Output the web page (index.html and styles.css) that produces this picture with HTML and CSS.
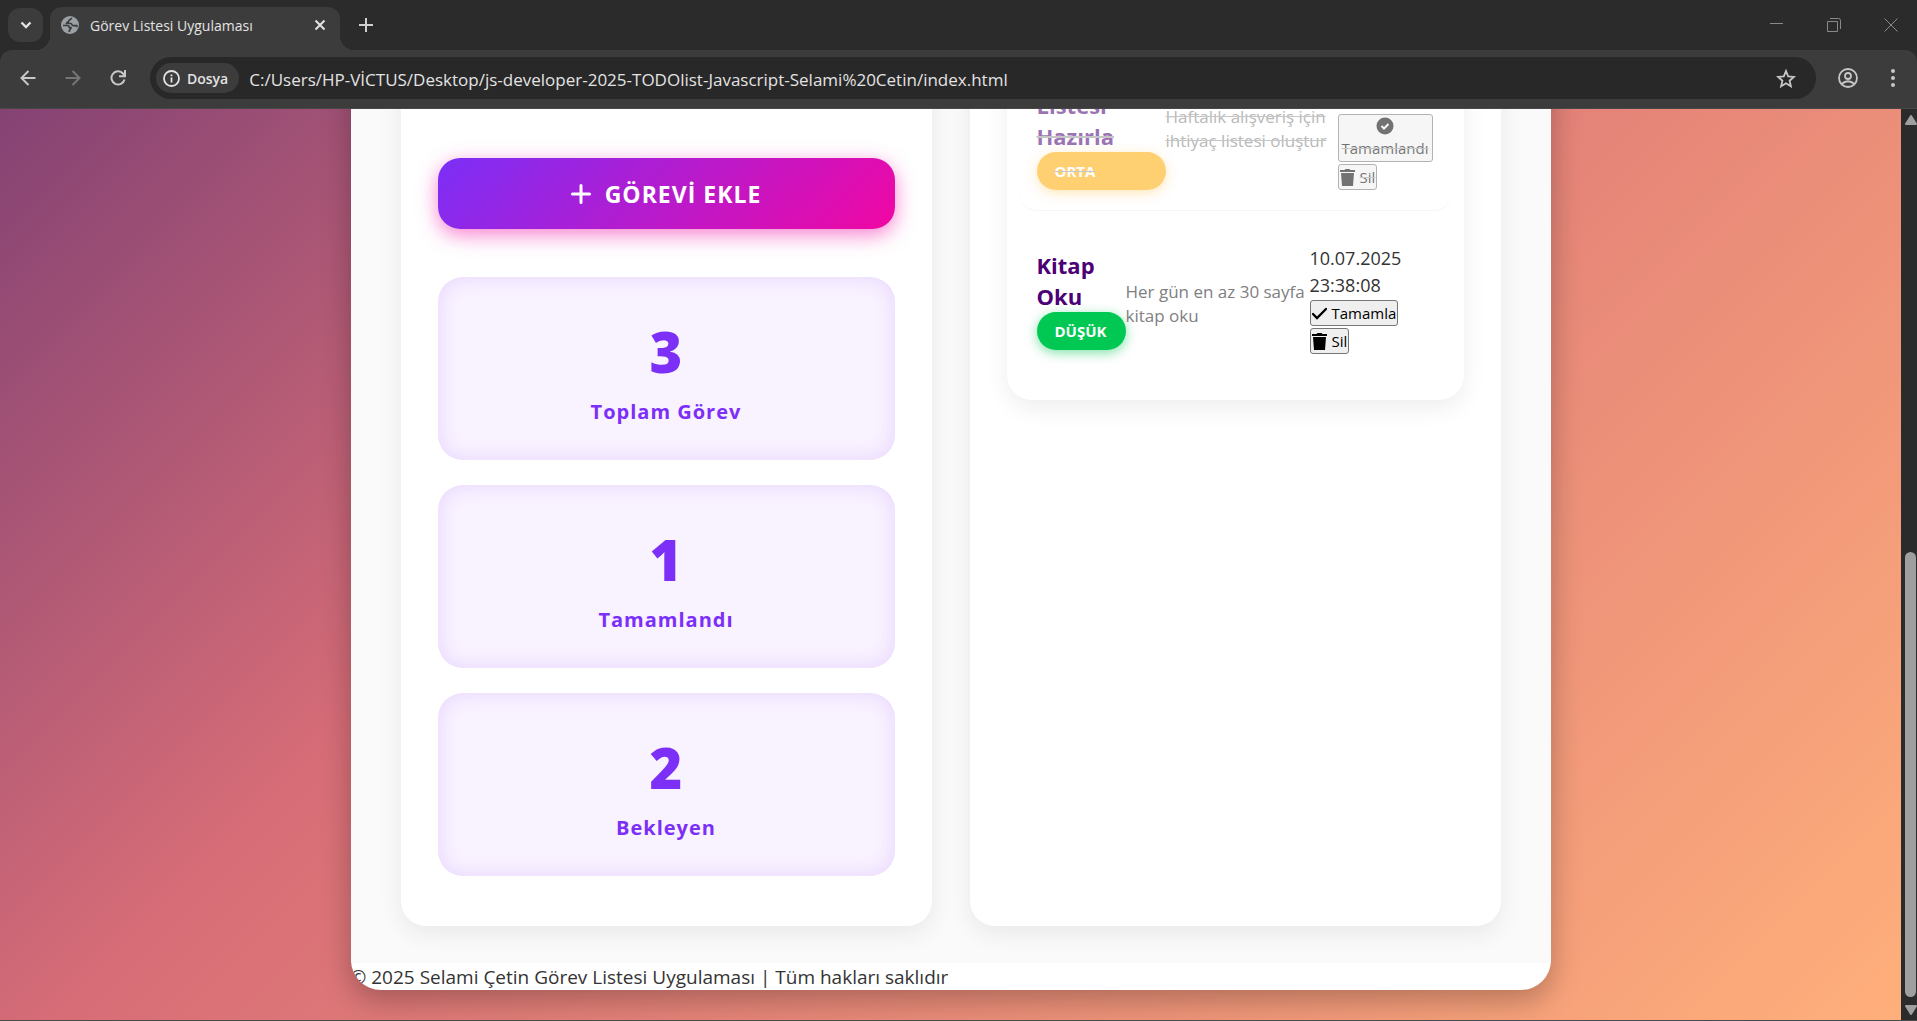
FILE: index.html
```html
<!DOCTYPE html>
<html lang="tr">
<head>
<meta charset="utf-8">
<title>Görev Listesi Uygulaması</title>
<link rel="stylesheet" href="styles.css">
</head>
<body>
<div class="browser">
  <header class="chrome">
    <div class="tabs">
      <button class="tab-search" aria-label="Sekme ara"><svg width="12" height="8" viewBox="0 0 12 8"><path d="M1.500 1.500 6 6l4.500-4.500" fill="none" stroke="#e3e3e3" stroke-width="2.400"/></svg></button>
      <div class="tab">
        <svg width="18" height="18" viewBox="0 0 18 18"><circle cx="9" cy="9" r="9" fill="#9aa0a6"/><path d="M10.500 1.800c.5 2-2.700 1.400-2.700 3.200 0 1.500-2.300.8-2.300 2.500h4.300c1.200 0 .8 2.200 2.400 2.200h3.600v1.500M2 9.500h3.500c1.800 0 3 .8 3 2.200H10c0 1.500-1.800 1.500-1.800 4.300" fill="none" stroke="#3c3c3c" stroke-width="1.700"/></svg>
        <span class="tab-title">Görev Listesi Uygulaması</span>
        <button class="plain" aria-label="Sekmeyi kapat"><svg width="12" height="12" viewBox="0 0 12 12"><path d="m1.500 1.500 9 9m0-9-9 9" stroke="#e3e3e3" stroke-width="2"/></svg></button>
      </div>
      <button class="plain new-tab" aria-label="Yeni sekme"><svg width="14" height="14" viewBox="0 0 14 14"><path d="M7 0v14M0 7h14" stroke="#d0d0d0" stroke-width="2"/></svg></button>
      <div class="window-controls">
        <button class="plain" aria-label="Simge durumuna küçült"><svg width="14" height="14" viewBox="0 0 14 14"><path d="M0 5.500h13" stroke="#8a8a8a"/></svg></button>
        <button class="plain" aria-label="Geri yükle"><svg width="14" height="14" viewBox="0 0 14 14"><path d="M.5 3.500h10v10H.5zM3 .5h8.500q2 0 2 2V11" fill="none" stroke="#8a8a8a"/></svg></button>
        <button class="plain" aria-label="Kapat"><svg width="14" height="14" viewBox="0 0 14 14"><path d="m.5.5 13 13m0-13-13 13" stroke="#8a8a8a"/></svg></button>
      </div>
    </div>
    <div class="toolbar">
      <button class="plain nav" aria-label="Geri"><svg width="16" height="16" viewBox="0 0 16 16"><path d="M15.500 8H2m6.500-7L1.500 8l7 7" fill="none" stroke="#c7c7c7" stroke-width="2"/></svg></button>
      <button class="plain nav" aria-label="İleri"><svg width="16" height="16" viewBox="0 0 16 16"><path d="M.5 8H14M7.500 1l7 7-7 7" fill="none" stroke="#757575" stroke-width="2"/></svg></button>
      <button class="plain nav" aria-label="Yenile"><svg width="16" height="16" viewBox="0 0 16 16"><path d="M14.500 9.500A6.600 6.600 0 1 1 13 3.500l1.500 2M15 0v6.200H9" fill="none" stroke="#c7c7c7" stroke-width="2"/></svg></button>
      <div class="omnibox">
        <button class="site-chip"><svg width="17" height="17" viewBox="0 0 17 17"><circle cx="8.500" cy="8.500" r="7.500" fill="none" stroke="#e3e3e3" stroke-width="1.800"/><path d="M8.500 7.500v5M8.500 4.500v1.800" stroke="#e3e3e3" stroke-width="1.800"/></svg>Dosya</button>
        <input class="url" aria-label="Adres" value="C:/Users/HP-VİCTUS/Desktop/js-developer-2025-TODOlist-Javascript-Selami%20Cetin/index.html">
        <button class="plain" aria-label="Yer işareti ekle"><svg width="20" height="19" viewBox="0 0 20 19"><path d="m10 2 2.200 5.400 5.800.5-4.400 3.800 1.300 5.600L10 14.300l-4.900 3 1.300-5.600L2 7.900l5.800-.5z" fill="none" stroke="#c7c7c7" stroke-width="1.800"/></svg></button>
      </div>
      <button class="plain profile" aria-label="Profil"><svg width="20" height="20" viewBox="0 0 20 20"><g fill="none" stroke="#c7c7c7" stroke-width="1.800"><circle cx="10" cy="10" r="9"/><circle cx="10" cy="8" r="3"/><path d="M3.500 16q6.500-5.500 13 0"/></g></svg></button>
      <button class="plain menu" aria-label="Menü"><svg width="4" height="18" viewBox="0 0 4 18" fill="#c7c7c7"><circle cx="2" cy="2" r="2"/><circle cx="2" cy="9" r="2"/><circle cx="2" cy="16" r="2"/></svg></button>
    </div>
  </header>
  <div class="view">
    <div class="page">
      <div class="container">
        <main class="columns">
          <section class="card form-card">
            <button class="add-button"><svg width="20" height="20" viewBox="0 0 20 20"><path d="M10 1.500v17M1.500 10h17" stroke="#fff" stroke-width="3" stroke-linecap="round"/></svg>GÖREVİ EKLE</button>
            <div class="stats">
              <div class="stat"><span class="stat-number">3</span><span class="stat-label">Toplam Görev</span></div>
              <div class="stat"><span class="stat-number">1</span><span class="stat-label">Tamamlandı</span></div>
              <div class="stat"><span class="stat-number">2</span><span class="stat-label">Bekleyen</span></div>
            </div>
          </section>
          <section class="card list-card">
            <ul class="tasks">
              <li class="task done">
                <div class="task-head"><h3>Alışveriş Listesi Hazırla</h3><span class="badge medium">ORTA</span></div>
                <p>Haftalık alışveriş için ihtiyaç listesi oluştur</p>
                <div class="actions">
                  <button class="small stacked"><svg width="18" height="18" viewBox="0 0 18 18"><circle cx="9" cy="9" r="8.500"/><path d="m5.500 9 2.500 2.500L12.500 7" fill="none" stroke="#efefef" stroke-width="2"/></svg><span>Tamamlandı</span></button>
                  <button class="small"><svg width="15" height="17" viewBox="0 0 15 17"><path d="M0 1h4.500l1-1h4l1 1H15v2H0zM1 4h13l-1 13H2z"/></svg><span>Sil</span></button>
                </div>
              </li>
              <li class="task open">
                <div class="task-head"><h3>Kitap Oku</h3><span class="badge low">DÜŞÜK</span></div>
                <p>Her gün en az 30 sayfa kitap oku</p>
                <div class="actions">
                  <time>10.07.2025 23:38:08</time>
                  <button class="small"><svg width="15" height="17" viewBox="0 0 15 17"><path d="m1 9 4 4 9-9" fill="none" stroke="#000" stroke-width="2.300" stroke-linecap="round"/></svg><span>Tamamla</span></button>
                  <button class="small"><svg width="15" height="17" viewBox="0 0 15 17"><path d="M0 1h4.500l1-1h4l1 1H15v2H0zM1 4h13l-1 13H2z"/></svg><span>Sil</span></button>
                </div>
              </li>
            </ul>
          </section>
        </main>
        <footer>© 2025 Selami Çetin Görev Listesi Uygulaması | Tüm hakları saklıdır</footer>
      </div>
    </div>
    <div class="scrollbar">
      <svg width="12" height="10" viewBox="0 0 12 10"><path d="M6 1 11 9H1z" fill="#9f9f9f" stroke="#9f9f9f" stroke-width="2" stroke-linejoin="round"/></svg>
      <div class="track"><div class="thumb"></div></div>
      <svg width="12" height="10" viewBox="0 0 12 10"><path d="M1 1h10L6 9z" fill="#9f9f9f" stroke="#9f9f9f" stroke-width="2" stroke-linejoin="round"/></svg>
    </div>
  </div>
</div>
</body>
</html>
```
FILE: styles.css
```css
* { box-sizing: border-box; }
body { margin: 0; font-family: "Open Sans", "Noto Sans", sans-serif; color: #333; }
button, input { font-family: inherit; }
svg { display: block; flex: none; }
.browser { height: 100vh; display: flex; flex-direction: column; border-bottom: 1px solid #4a4a4a; overflow: hidden; }
.plain { display: flex; align-items: center; justify-content: center; background: none; border: 0; padding: 0; }

.chrome { flex: none; background: #2b2b2b; }
.tabs { height: 50px; display: flex; align-items: center; padding-left: 8px; }
.tab-search { width: 35px; height: 34px; border: 0; border-radius: 12px; background: #3c3c3c; padding: 0; display: flex; align-items: center; justify-content: center; }
.tab { position: relative; align-self: flex-end; width: 290px; height: 43px; margin-left: 7px; padding: 0 14px 7px 11px; display: flex; align-items: center; gap: 11px; background: #3c3c3c; border-radius: 12px 12px 0 0; }
.tab::before, .tab::after { content: ""; position: absolute; bottom: 0; width: 14px; height: 14px; }
.tab::before { right: 100%; background: radial-gradient(circle at 0 0, transparent 14px, #3c3c3c 14px); }
.tab::after { left: 100%; background: radial-gradient(circle at 100% 0, transparent 14px, #3c3c3c 14px); }
.tab-title { flex: 1; font-size: 14px; color: #e3e3e3; white-space: nowrap; }
.new-tab { margin-left: 19px; }
.window-controls { margin-left: auto; display: flex; gap: 43px; padding-right: 19px; }
.toolbar { height: 59px; display: flex; align-items: center; padding: 0 22px 2px 19px; background: #3c3c3c; border-bottom: 1px solid #484848; border-radius: 12px 12px 0 0; }
.nav { width: 17px; margin-right: 28px; }
.omnibox { flex: 1; height: 42px; margin-left: -4px; padding: 0 20px 0 6px; display: flex; align-items: center; border-radius: 21px; background: #282828; }
.site-chip { height: 30px; border: 0; border-radius: 15px; padding: 0 11px 0 7px; display: flex; align-items: center; gap: 7px; background: #3c3c3c; color: #e3e3e3; font-size: 14px; font-weight: 600; }
.url { flex: 1; border: 0; padding: 2px 0 0; margin-left: 10px; background: none; color: #e3e3e3; font-size: 17px; outline: 0; }
.profile { margin-left: 22px; }
.menu { margin-left: 33px; }

.view { flex: 1; min-height: 0; display: flex; }
.page { flex: 1; min-width: 0; overflow: hidden; display: flex; flex-direction: column; justify-content: flex-end; align-items: center; padding: 0 20px 30px; background: linear-gradient(135deg, #3a1c71, #d76d77, #ffaf7b) bottom / 100% 1781px; }
.container { flex: none; width: 100%; max-width: 1200px; border-radius: 30px; overflow: hidden; background: #fff; box-shadow: 0 10px 30px rgba(0, 0, 0, .27); }
.columns { display: grid; grid-template-columns: repeat(2, minmax(0, 1fr)); column-gap: 38px; padding: 37px 50px; background: #fafafa; }
.card { background: #fff; border-radius: 25px; padding: 37px; box-shadow: 0 8px 25px rgba(0, 0, 0, .07); }
.form-card { padding: 168px 37px 50px; }
.add-button { width: 100%; height: 71px; border: 0; border-radius: 22px; padding: 1px 0 0; display: flex; align-items: center; justify-content: center; gap: 14px; background: linear-gradient(135deg, #7b2ff7, #f107a3); box-shadow: 0 6px 20px rgba(241, 7, 163, .5); color: #fff; font-size: 23px; font-weight: 700; letter-spacing: 1px; }
.stats { display: flex; flex-direction: column; gap: 25px; margin-top: 48px; }
.stat { height: 183px; padding-top: 12px; border-radius: 25px; display: flex; flex-direction: column; align-items: center; justify-content: center; background: #f9f2ff; box-shadow: inset 0 0 20px rgba(123, 47, 247, .15); color: #7b2ff7; }
.stat-number { font-size: 56px; line-height: 74px; font-weight: 800; }
.stat-label { font-size: 20px; line-height: 48px; font-weight: 700; letter-spacing: 1px; }

.tasks { list-style: none; margin: 0; padding: 12px; border-radius: 25px; background: #fff; box-shadow: 0 8px 25px rgba(0, 0, 0, .07); }
.task { display: grid; align-items: center; margin-bottom: 14px; padding: 20px 18px; border-radius: 18px; }
.task.done { grid-template-columns: 129px 172px 1fr; border-bottom: 1px solid #eee; opacity: .55; text-decoration: line-through #999; }
.task.open { grid-template-columns: 89px 184px 1fr; }
.task h3 { margin: 0; width: 89px; font-size: 22px; line-height: 31px; font-weight: 700; color: #4b0076; }
.task p { margin: 0; padding-top: 8px; font-size: 17px; line-height: 24px; color: #808080; }
.badge { display: block; height: 38px; padding: 0 18px; border-radius: 19px; font-size: 15px; line-height: 39px; font-weight: 700; color: #fff; white-space: nowrap; }
.medium { background: #ffab00; box-shadow: 0 3px 12px rgba(255, 171, 0, .5); }
.low { background: #00c853; box-shadow: 0 3px 12px rgba(0, 200, 83, .5); }
.actions { display: flex; flex-direction: column; align-items: flex-start; gap: 2px; }
.done .actions { align-self: end; }
.actions time { width: 100px; margin-bottom: -1px; font-size: 18px; line-height: 27px; }
.small { height: 26px; display: inline-flex; align-items: center; gap: 5px; padding: 0 1px; border: 1px solid #767676; border-radius: 3px; background: #efefef; color: #000; font-size: 15px; line-height: 22px; }
.small span { display: inline-block; }
.stacked { height: 48px; flex-direction: column; justify-content: center; gap: 2px; padding: 0 3px; }

footer { padding-top: 1px; line-height: 26px; font-size: 19px; }

.scrollbar { flex: none; width: 16px; padding: 6px 0 5px 4px; display: flex; flex-direction: column; background: #2b2b2b; }
.track { flex: 1; display: flex; flex-direction: column; justify-content: flex-end; padding-bottom: 8px; }
.thumb { height: 51%; width: 11px; border-radius: 6px; background: #9f9f9f; }
```
